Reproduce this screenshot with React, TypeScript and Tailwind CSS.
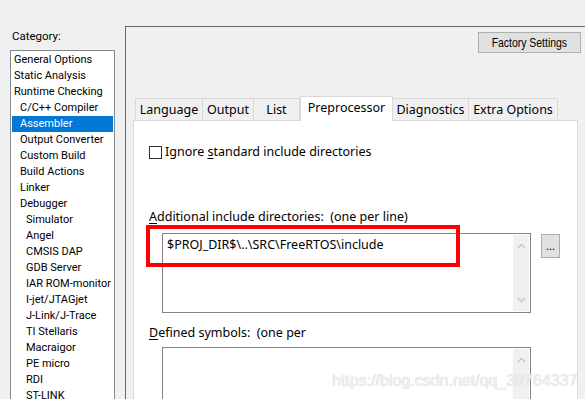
import React from "react";

const items: { label: string; indent: number; selected?: boolean }[] = [
  { label: "General Options", indent: 3 },
  { label: "Static Analysis", indent: 3 },
  { label: "Runtime Checking", indent: 3 },
  { label: "C/C++ Compiler", indent: 9 },
  { label: "Assembler", indent: 9, selected: true },
  { label: "Output Converter", indent: 9 },
  { label: "Custom Build", indent: 9 },
  { label: "Build Actions", indent: 9 },
  { label: "Linker", indent: 9 },
  { label: "Debugger", indent: 9 },
  { label: "Simulator", indent: 15 },
  { label: "Angel", indent: 15 },
  { label: "CMSIS DAP", indent: 15 },
  { label: "GDB Server", indent: 15 },
  { label: "IAR ROM-monitor", indent: 15 },
  { label: "I-jet/JTAGjet", indent: 15 },
  { label: "J-Link/J-Trace", indent: 15 },
  { label: "TI Stellaris", indent: 15 },
  { label: "Macraigor", indent: 15 },
  { label: "PE micro", indent: 15 },
  { label: "RDI", indent: 15 },
  { label: "ST-LINK", indent: 15 },
];

const tabs = [
  { label: "Language", w: "w-[68px]" },
  { label: "Output", w: "w-[52px]" },
  { label: "List", w: "w-[47px]" },
  { label: "Preprocessor", w: "w-[93px]", selected: true },
  { label: "Diagnostics", w: "w-[77px]" },
  { label: "Extra Options", w: "w-[90px]" },
];

function Chevron({ up }: { up?: boolean }) {
  return (
    <svg width="9" height="6" viewBox="0 0 9 6" className="block">
      <path
        d={up ? "M1 5 L4.5 1.5 L8 5" : "M1 1 L4.5 4.5 L8 1"}
        fill="none"
        stroke="#c4c4c4"
        strokeWidth="1.3"
      />
    </svg>
  );
}

function TextBox({ children }: { children?: React.ReactNode }) {
  return (
    <div className="ml-[13px] flex h-[80px] w-[369px] border border-[#828282] bg-white">
      <div className="flex-1 pl-[4px] pt-[3px] leading-[16px]">{children}</div>
      <div className="my-[1px] mr-[1px] flex w-[16px] flex-col items-center justify-between bg-[#f0f0f0] py-[8px]">
        <Chevron up />
        <Chevron />
      </div>
    </div>
  );
}

export default function App() {
  return (
    <div className="relative flex h-[399px] w-[585px] overflow-hidden bg-[#f0f0f0] font-['Noto_Sans','Liberation_Sans',sans-serif] text-[12px] text-black">
      {/* Left: category */}
      <div className="flex w-[125px] shrink-0 flex-col pl-[10px] pt-[29px] font-['Roboto','Liberation_Sans',sans-serif]">
        <div className="pl-[2px] text-[11.5px] leading-[14px]">Category:</div>
        <div className="mt-[7px] w-[105px] flex-1 border border-[#828790] bg-white pt-[1px] text-[11px]">
          {items.map((it) => (
            <div
              key={it.label}
              className={`mx-[1px] h-[16px] whitespace-nowrap leading-[16px] ${
                it.selected ? "bg-[#0078d7] text-white" : ""
              }`}
              style={{ paddingLeft: it.indent - 1 }}
            >
              {it.label}
            </div>
          ))}
        </div>
      </div>

      {/* Right: options panel */}
      <div className="flex flex-1 flex-col pt-[26px]">
        <div className="flex flex-1 flex-col border-l border-t border-[#696969]">
          <div className="flex justify-end pr-[4px] pt-[5px]">
            <div className="flex h-[21px] w-[103px] items-center justify-center border border-[#adadad] bg-[#e1e1e1] font-['Liberation_Sans',sans-serif] text-[12px]">
              <span className="inline-block scale-x-[0.87] whitespace-nowrap">Factory Settings</span>
            </div>
          </div>

          {/* tab strip */}
          <div className="ml-[9px] mt-[43px] flex h-[24px] items-end">
            {tabs.map((t) =>
              t.selected ? (
                <div
                  key={t.label}
                  className={`${t.w} relative z-10 -mb-[1px] h-[25px] border border-b-0 border-[#d9d9d9] bg-white pt-[3px] text-center text-[12.5px] leading-[16px]`}
                >
                  {t.label}
                </div>
              ) : (
                <div
                  key={t.label}
                  className={`${t.w} -ml-[1px] h-[22px] border border-b-0 border-[#d9d9d9] bg-[#f0f0f0] pt-[3px] text-center text-[12.5px] leading-[16px] first:ml-0`}
                >
                  {t.label}
                </div>
              )
            )}
          </div>

          {/* tab page */}
          <div className="ml-[7px] flex w-[445px] flex-1 flex-col border border-[#d9d9d9] bg-white pl-[15px] text-[12.5px]">
            <div className="mt-[23px] flex h-[16px] items-center">
              <div className="h-[13px] w-[13px] border border-[#333333] bg-white" />
              <span className="ml-[3px] leading-[16px]">
                Ignore <span className="underline underline-offset-2">s</span>tandard include directories
              </span>
            </div>

            <div className="mt-[49px] h-[16px] leading-[16px]">
              <span className="underline underline-offset-2">A</span>dditional include directories:&nbsp; (one per line)
            </div>

            <div className="mt-[8px] flex items-start">
              <TextBox>$PROJ_DIR$\..\SRC\FreeRTOS\include</TextBox>
              <div className="ml-[10px] mt-[1px] flex h-[24px] w-[19px] items-center justify-center border border-[#adadad] bg-[#e1e1e1] text-[11px] leading-[10px]">
                ...
              </div>
            </div>

            <div className="mt-[12px] h-[16px] leading-[16px]">
              <span className="underline underline-offset-2">D</span>efined symbols:&nbsp; (one per
            </div>

            <div className="mt-[6px]">
              <TextBox />
            </div>
          </div>
        </div>
      </div>

      {/* red highlight annotation */}
      <div className="absolute left-[146px] top-[225px] h-[42px] w-[314px] border-[4px] border-[#ff0000]" />

      {/* watermark */}
      <div className="absolute left-[332px] top-[371px] whitespace-nowrap font-['Liberation_Sans',sans-serif] text-[16px] leading-[20px] text-[#f2f2f2] [text-shadow:0_0_1px_#bdbdbd]">
        https://blog.csdn.net/qq_39764337
      </div>
    </div>
  );
}
